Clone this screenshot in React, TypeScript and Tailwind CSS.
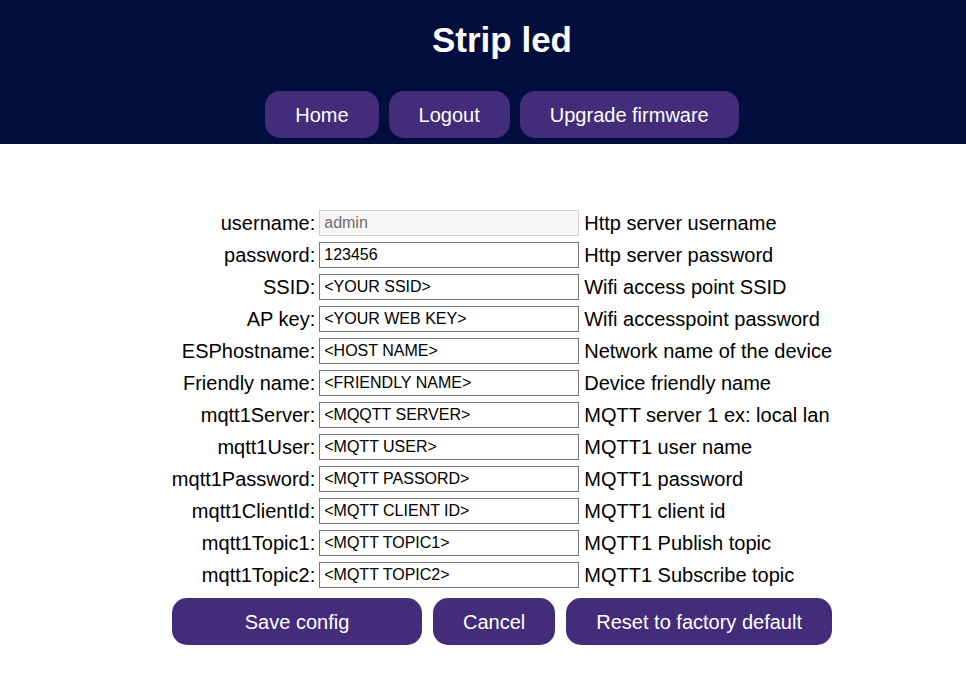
const fields = [
  { label: 'username:', value: 'admin', hint: 'Http server username', disabled: true },
  { label: 'password:', value: '123456', hint: 'Http server password' },
  { label: 'SSID:', value: '<YOUR SSID>', hint: 'Wifi access point SSID' },
  { label: 'AP key:', value: '<YOUR WEB KEY>', hint: 'Wifi accesspoint password' },
  { label: 'ESPhostname:', value: '<HOST NAME>', hint: 'Network name of the device' },
  { label: 'Friendly name:', value: '<FRIENDLY NAME>', hint: 'Device friendly name' },
  { label: 'mqtt1Server:', value: '<MQQTT SERVER>', hint: 'MQTT server 1 ex: local lan' },
  { label: 'mqtt1User:', value: '<MQTT USER>', hint: 'MQTT1 user name' },
  { label: 'mqtt1Password:', value: '<MQTT PASSORD>', hint: 'MQTT1 password' },
  { label: 'mqtt1ClientId:', value: '<MQTT CLIENT ID>', hint: 'MQTT1 client id' },
  { label: 'mqtt1Topic1:', value: '<MQTT TOPIC1>', hint: 'MQTT1 Publish topic' },
  { label: 'mqtt1Topic2:', value: '<MQTT TOPIC2>', hint: 'MQTT1 Subscribe topic' },
];

const NavButton = ({ children, className = '' }: { children: React.ReactNode; className?: string }) => (
  <button className={`h-[47px] rounded-[15px] bg-[#432c7a] px-[30px] text-[20px] text-white ${className}`}>
    {children}
  </button>
);

export default function App() {
  return (
    <div className="min-h-[673px] bg-white font-['Liberation_Sans',Arial,sans-serif] text-black">
      <header className="bg-[#020f3e] pl-[38px] pt-[20px] pb-[6px]">
        <h1 className="text-center text-[35px] font-bold leading-[40px] text-white">Strip led</h1>
        <nav className="mt-[31px] flex justify-center gap-[10px]">
          <NavButton>Home</NavButton>
          <NavButton>Logout</NavButton>
          <NavButton>Upgrade firmware</NavButton>
        </nav>
      </header>

      <main className="pl-[38px] pt-[63px]">
        <div className="grid grid-cols-[auto_260px_auto] justify-center gap-x-[4px]">
          {fields.map((f) => (
            <div key={f.label} className="contents">
              <label className="flex h-[32px] items-center justify-end text-[20px]">{f.label}</label>
              <div className="flex h-[32px] items-center">
                <input
                  readOnly
                  disabled={f.disabled}
                  value={f.value}
                  className={`h-[26px] w-[260px] border pl-[4px] text-[16px] outline-none ${
                    f.disabled
                      ? 'border-[#d0d0d0] bg-[#f6f6f6] text-[#6d6d6d]'
                      : 'border-[#767676] bg-white text-black'
                  }`}
                />
              </div>
              <span className="flex h-[32px] items-center pl-[1px] text-[20px]">{f.hint}</span>
            </div>
          ))}
        </div>
        <div className="mt-[7px] flex justify-center gap-[11px]">
          <NavButton className="w-[250px]">Save config</NavButton>
          <NavButton>Cancel</NavButton>
          <NavButton>Reset to factory default</NavButton>
        </div>
      </main>
    </div>
  );
}
